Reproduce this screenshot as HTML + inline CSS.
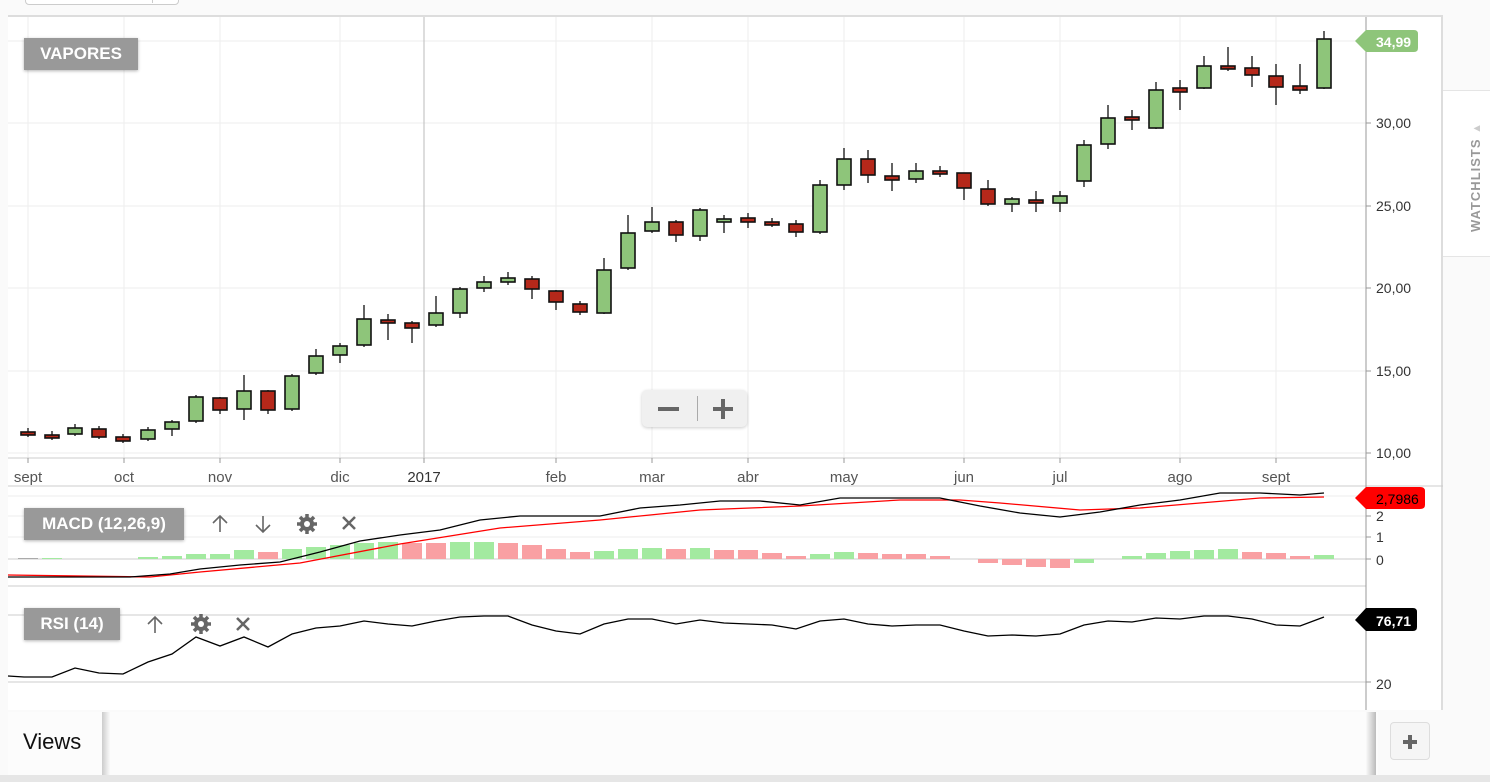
<!DOCTYPE html>
<html><head><meta charset="utf-8"><style>
body{margin:0;width:1490px;height:782px;background:#fafafa;font-family:"Liberation Sans",Arial,sans-serif;overflow:hidden;position:relative}
.g{fill:#8ec57a;stroke:#111;stroke-width:1.6}
.r{fill:#b5281a;stroke:#111;stroke-width:1.6}
.w line{stroke:#222;stroke-width:1.4}
.lbl{position:absolute;background:#999;color:#fff;font-weight:bold;font-size:17px;box-shadow:0 1px 3px rgba(0,0,0,.3)}
</style></head><body>
<div style="position:absolute;left:25px;top:-6px;width:152px;height:9px;border:1px solid #ccc;border-radius:4px;background:#fff"></div>
<div style="position:absolute;left:152px;top:-6px;width:1px;height:9px;background:#ccc"></div>
<div style="position:absolute;left:8px;top:15px;width:1435px;height:695px;background:#fff;border-top:2px solid #ddd;border-right:2px solid #ddd;box-sizing:border-box"></div>
<div style="position:absolute;left:1443px;top:90px;width:47px;height:165px;background:#fff;border-top:1px solid #e5e5e5;border-bottom:1px solid #e5e5e5"></div>
<div style="position:absolute;left:1468px;top:232px;transform:rotate(-90deg);transform-origin:0 0;color:#999;font-size:13px;font-weight:bold;letter-spacing:1px;white-space:nowrap">WATCHLISTS <span style="font-size:11px;color:#ccc">▲</span></div>
<svg style="position:absolute;left:0;top:0" width="1490" height="782">
<g stroke="#eee" stroke-width="1">
<line x1="8" y1="41" x2="1366" y2="41"/><line x1="8" y1="123" x2="1366" y2="123"/><line x1="8" y1="206" x2="1366" y2="206"/><line x1="8" y1="288" x2="1366" y2="288"/><line x1="8" y1="371" x2="1366" y2="371"/><line x1="8" y1="453" x2="1366" y2="453"/>
<line x1="28" y1="17" x2="28" y2="458"/><line x1="124" y1="17" x2="124" y2="458"/><line x1="220" y1="17" x2="220" y2="458"/><line x1="340" y1="17" x2="340" y2="458"/><line x1="556" y1="17" x2="556" y2="458"/><line x1="652" y1="17" x2="652" y2="458"/><line x1="748" y1="17" x2="748" y2="458"/><line x1="844" y1="17" x2="844" y2="458"/><line x1="964" y1="17" x2="964" y2="458"/><line x1="1060" y1="17" x2="1060" y2="458"/><line x1="1180" y1="17" x2="1180" y2="458"/><line x1="1276" y1="17" x2="1276" y2="458"/>
<line x1="8" y1="496" x2="1366" y2="496"/><line x1="8" y1="516" x2="1366" y2="516"/><line x1="8" y1="537" x2="1366" y2="537"/>
</g>
<line x1="424" y1="17" x2="424" y2="458" stroke="#bbb"/>
<g stroke="#ccc"><line x1="8" y1="458" x2="1366" y2="458"/><line x1="8" y1="486" x2="1443" y2="486"/><line x1="8" y1="559" x2="1366" y2="559"/><line x1="8" y1="586" x2="1366" y2="586"/><line x1="8" y1="615" x2="1366" y2="615"/><line x1="8" y1="682" x2="1366" y2="682"/></g>
<line x1="1366" y1="17" x2="1366" y2="710" stroke="#999"/>
<g stroke="#999"><line x1="1366" y1="123" x2="1371" y2="123"/><line x1="1366" y1="206" x2="1371" y2="206"/><line x1="1366" y1="288" x2="1371" y2="288"/><line x1="1366" y1="371" x2="1371" y2="371"/><line x1="1366" y1="453" x2="1371" y2="453"/><line x1="1366" y1="516" x2="1371" y2="516"/><line x1="1366" y1="537" x2="1371" y2="537"/><line x1="1366" y1="559" x2="1371" y2="559"/><line x1="1366" y1="682" x2="1371" y2="682"/>
<line x1="28" y1="458" x2="28" y2="463"/><line x1="124" y1="458" x2="124" y2="463"/><line x1="220" y1="458" x2="220" y2="463"/><line x1="340" y1="458" x2="340" y2="463"/><line x1="424" y1="458" x2="424" y2="463"/><line x1="556" y1="458" x2="556" y2="463"/><line x1="652" y1="458" x2="652" y2="463"/><line x1="748" y1="458" x2="748" y2="463"/><line x1="844" y1="458" x2="844" y2="463"/><line x1="964" y1="458" x2="964" y2="463"/><line x1="1060" y1="458" x2="1060" y2="463"/><line x1="1180" y1="458" x2="1180" y2="463"/><line x1="1276" y1="458" x2="1276" y2="463"/></g>
<g font-size="14" fill="#333">
<text x="1376" y="128">30,00</text><text x="1376" y="211">25,00</text><text x="1376" y="293">20,00</text><text x="1376" y="376">15,00</text><text x="1376" y="458">10,00</text>
<text x="1376" y="521">2</text><text x="1376" y="542">1</text><text x="1376" y="565">0</text><text x="1376" y="689">20</text>
</g>
<g font-size="15" fill="#555" text-anchor="middle">
<text x="28" y="482">sept</text><text x="124" y="482">oct</text><text x="220" y="482">nov</text><text x="340" y="482">dic</text><text x="424" y="482" fill="#333">2017</text><text x="556" y="482">feb</text><text x="652" y="482">mar</text><text x="748" y="482">abr</text><text x="844" y="482">may</text><text x="964" y="482">jun</text><text x="1060" y="482">jul</text><text x="1180" y="482">ago</text><text x="1276" y="482">sept</text>
</g>
<g fill="#a3eaa0">
<rect x="42" y="558" width="20" height="1"/><rect x="138" y="557" width="20" height="2"/><rect x="162" y="556" width="20" height="3"/><rect x="186" y="554" width="20" height="5"/><rect x="210" y="554" width="20" height="5"/><rect x="234" y="550" width="20" height="9"/><rect x="282" y="549" width="20" height="10"/><rect x="306" y="547" width="20" height="12"/><rect x="330" y="545" width="20" height="14"/><rect x="354" y="543" width="20" height="16"/><rect x="378" y="542" width="20" height="17"/><rect x="450" y="542" width="20" height="17"/><rect x="474" y="542" width="20" height="17"/><rect x="594" y="551" width="20" height="8"/><rect x="618" y="549" width="20" height="10"/><rect x="642" y="548" width="20" height="11"/><rect x="690" y="548" width="20" height="11"/><rect x="810" y="554" width="20" height="5"/><rect x="834" y="552" width="20" height="7"/><rect x="1074" y="559" width="20" height="4"/><rect x="1122" y="556" width="20" height="3"/><rect x="1146" y="553" width="20" height="6"/><rect x="1170" y="551" width="20" height="8"/><rect x="1194" y="550" width="20" height="9"/><rect x="1218" y="549" width="20" height="10"/><rect x="1314" y="555" width="20" height="4"/>
</g>
<rect x="18" y="558" width="20" height="1" fill="#aaa"/>
<g fill="#f9a0a3">
<rect x="258" y="552" width="20" height="7"/><rect x="402" y="543" width="20" height="16"/><rect x="426" y="543" width="20" height="16"/><rect x="498" y="543" width="20" height="16"/><rect x="522" y="545" width="20" height="14"/><rect x="546" y="549" width="20" height="10"/><rect x="570" y="552" width="20" height="7"/><rect x="666" y="549" width="20" height="10"/><rect x="714" y="550" width="20" height="9"/><rect x="738" y="550" width="20" height="9"/><rect x="762" y="553" width="20" height="6"/><rect x="786" y="556" width="20" height="3"/><rect x="858" y="553" width="20" height="6"/><rect x="882" y="554" width="20" height="5"/><rect x="906" y="554" width="20" height="5"/><rect x="930" y="556" width="20" height="3"/><rect x="978" y="559" width="20" height="4"/><rect x="1002" y="559" width="20" height="6"/><rect x="1026" y="559" width="20" height="8"/><rect x="1050" y="559" width="20" height="9"/><rect x="1242" y="552" width="20" height="7"/><rect x="1266" y="553" width="20" height="6"/><rect x="1290" y="556" width="20" height="3"/>
</g>
<polyline fill="none" stroke="#f00" stroke-width="1.3" points="8,575 150,577 200,572 300,563 400,544 500,528 600,520 700,510 800,506 900,500 960,500 1000,503 1080,510 1140,508 1200,503 1260,498 1324,497"/>
<polyline fill="none" stroke="#000" stroke-width="1.3" points="8,577 130,577 170,574 200,569 240,565 280,562 320,552 360,541 400,535 440,530 480,520 520,516 560,516 600,516 640,508 680,505 720,501 760,501 800,505 840,498 900,498 940,498 980,506 1020,513 1060,517 1100,512 1140,505 1180,500 1220,493 1260,493 1300,495 1324,493"/>
<polyline fill="none" stroke="#000" stroke-width="1.3" points="8,676 24,677 52,677 75,668 99,673 123,674 148,662 172,654 196,637 220,646 244,637 268,647 292,634 316,628 340,626 364,621 388,624 412,626 436,621 460,617 484,616 508,616 532,625 556,631 580,634 604,624 628,619 652,619 676,624 700,620 724,623 748,624 772,625 796,629 820,621 844,619 868,624 892,626 916,625 940,625 964,631 988,636 1012,635 1036,636 1060,634 1084,625 1108,621 1132,622 1156,618 1180,619 1204,616 1228,616 1252,619 1276,625 1300,626 1324,617"/>
<g class="w">
<line x1="28" y1="428" x2="28" y2="437"/><line x1="52" y1="431" x2="52" y2="440"/><line x1="75" y1="424" x2="75" y2="436"/><line x1="99" y1="426" x2="99" y2="439"/><line x1="123" y1="434" x2="123" y2="443"/><line x1="148" y1="427" x2="148" y2="441"/><line x1="172" y1="420" x2="172" y2="436"/><line x1="196" y1="395" x2="196" y2="423"/><line x1="220" y1="397" x2="220" y2="414"/><line x1="244" y1="375" x2="244" y2="420"/><line x1="268" y1="390" x2="268" y2="414"/><line x1="292" y1="374" x2="292" y2="411"/><line x1="316" y1="349" x2="316" y2="375"/><line x1="340" y1="343" x2="340" y2="363"/><line x1="364" y1="305" x2="364" y2="347"/><line x1="388" y1="314" x2="388" y2="340"/><line x1="412" y1="321" x2="412" y2="343"/><line x1="436" y1="296" x2="436" y2="327"/><line x1="460" y1="287" x2="460" y2="318"/><line x1="484" y1="276" x2="484" y2="292"/><line x1="508" y1="272" x2="508" y2="285"/><line x1="532" y1="276" x2="532" y2="299"/><line x1="556" y1="290" x2="556" y2="310"/><line x1="580" y1="301" x2="580" y2="315"/><line x1="604" y1="258" x2="604" y2="314"/><line x1="628" y1="215" x2="628" y2="270"/><line x1="652" y1="207" x2="652" y2="233"/><line x1="676" y1="220" x2="676" y2="242"/><line x1="700" y1="208" x2="700" y2="241"/><line x1="724" y1="215" x2="724" y2="233"/><line x1="748" y1="213" x2="748" y2="228"/><line x1="772" y1="218" x2="772" y2="227"/><line x1="796" y1="220" x2="796" y2="237"/><line x1="820" y1="180" x2="820" y2="234"/><line x1="844" y1="148" x2="844" y2="190"/><line x1="868" y1="150" x2="868" y2="183"/><line x1="892" y1="163" x2="892" y2="191"/><line x1="916" y1="163" x2="916" y2="183"/><line x1="940" y1="166" x2="940" y2="177"/><line x1="964" y1="173" x2="964" y2="200"/><line x1="988" y1="180" x2="988" y2="206"/><line x1="1012" y1="197" x2="1012" y2="212"/><line x1="1036" y1="191" x2="1036" y2="212"/><line x1="1060" y1="191" x2="1060" y2="212"/><line x1="1084" y1="140" x2="1084" y2="187"/><line x1="1108" y1="105" x2="1108" y2="149"/><line x1="1132" y1="110" x2="1132" y2="130"/><line x1="1156" y1="82" x2="1156" y2="129"/><line x1="1180" y1="80" x2="1180" y2="110"/><line x1="1204" y1="56" x2="1204" y2="89"/><line x1="1228" y1="47" x2="1228" y2="71"/><line x1="1252" y1="56" x2="1252" y2="87"/><line x1="1276" y1="64" x2="1276" y2="105"/><line x1="1300" y1="64" x2="1300" y2="94"/><line x1="1324" y1="31" x2="1324" y2="89"/>
</g>
<rect class="r" x="21" y="432" width="14" height="3"/><rect class="r" x="45" y="435" width="14" height="3"/><rect class="g" x="68" y="428" width="14" height="6"/><rect class="r" x="92" y="429" width="14" height="8"/><rect class="r" x="116" y="437" width="14" height="4"/><rect class="g" x="141" y="430" width="14" height="9"/><rect class="g" x="165" y="422" width="14" height="7"/><rect class="g" x="189" y="397" width="14" height="24"/><rect class="r" x="213" y="398" width="14" height="12"/><rect class="g" x="237" y="391" width="14" height="18"/><rect class="r" x="261" y="391" width="14" height="19"/><rect class="g" x="285" y="376" width="14" height="33"/><rect class="g" x="309" y="356" width="14" height="17"/><rect class="g" x="333" y="346" width="14" height="9"/><rect class="g" x="357" y="319" width="14" height="26"/><rect class="r" x="381" y="320" width="14" height="3"/><rect class="r" x="405" y="323" width="14" height="5"/><rect class="g" x="429" y="313" width="14" height="12"/><rect class="g" x="453" y="289" width="14" height="24"/><rect class="g" x="477" y="282" width="14" height="6"/><rect class="g" x="501" y="278" width="14" height="4"/><rect class="r" x="525" y="279" width="14" height="10"/><rect class="r" x="549" y="291" width="14" height="11"/><rect class="r" x="573" y="304" width="14" height="8"/><rect class="g" x="597" y="270" width="14" height="43"/><rect class="g" x="621" y="233" width="14" height="35"/><rect class="g" x="645" y="222" width="14" height="9"/><rect class="r" x="669" y="222" width="14" height="13"/><rect class="g" x="693" y="210" width="14" height="26"/><rect class="g" x="717" y="219" width="14" height="3"/><rect class="r" x="741" y="218" width="14" height="4"/><rect class="r" x="765" y="222" width="14" height="3"/><rect class="r" x="789" y="224" width="14" height="8"/><rect class="g" x="813" y="185" width="14" height="47"/><rect class="g" x="837" y="159" width="14" height="26"/><rect class="r" x="861" y="159" width="14" height="16"/><rect class="r" x="885" y="176" width="14" height="4"/><rect class="g" x="909" y="171" width="14" height="8"/><rect class="r" x="933" y="171" width="14" height="3"/><rect class="r" x="957" y="173" width="14" height="15"/><rect class="r" x="981" y="189" width="14" height="15"/><rect class="g" x="1005" y="199" width="14" height="5"/><rect class="r" x="1029" y="200" width="14" height="3"/><rect class="g" x="1053" y="196" width="14" height="7"/><rect class="g" x="1077" y="145" width="14" height="36"/><rect class="g" x="1101" y="118" width="14" height="26"/><rect class="r" x="1125" y="117" width="14" height="3"/><rect class="g" x="1149" y="90" width="14" height="38"/><rect class="r" x="1173" y="88" width="14" height="4"/><rect class="g" x="1197" y="66" width="14" height="22"/><rect class="r" x="1221" y="66" width="14" height="3"/><rect class="r" x="1245" y="68" width="14" height="7"/><rect class="r" x="1269" y="76" width="14" height="11"/><rect class="r" x="1293" y="86" width="14" height="4"/><rect class="g" x="1317" y="39" width="14" height="49"/>
<path d="M1355,41 L1366,30 L1414,30 Q1418,30 1418,34 L1418,48 Q1418,52 1414,52 L1366,52 Z" fill="#8ec57a"/>
<text x="1376" y="47" font-size="14" font-weight="bold" fill="#fff">34,99</text>
<path d="M1355,498 L1366,487 L1420,487 Q1425,487 1425,491 L1425,505 Q1425,509 1420,509 L1366,509 Z" fill="#f00"/>
<text x="1376" y="504" font-size="14" fill="#000">2,7986</text>
<path d="M1355,620 L1366,608 L1413,608 Q1417,608 1417,612 L1417,627 Q1417,631 1413,631 L1366,631 Z" fill="#000"/>
<text x="1376" y="626" font-size="14" font-weight="bold" fill="#fff">76,71</text>
<g stroke="#666" stroke-width="1.6" fill="none">
<path d="M220,532 V516 M213,523 L220,516 L227,523"/>
<path d="M263,516 V532 M256,525 L263,532 L270,525"/>
<path d="M343,517 L355,529 M355,517 L343,529" stroke-width="2.5"/>
<path d="M155,633 V617 M148,624 L155,617 L162,624"/>
<path d="M237,618 L249,630 M249,618 L237,630" stroke-width="2.5"/>
</g>
<g fill="#666">
<circle cx="307" cy="524" r="7"/><g stroke="#666" stroke-width="3.5"><line x1="307" y1="514" x2="307" y2="534"/><line x1="297" y1="524" x2="317" y2="524"/><line x1="300" y1="517" x2="314" y2="531"/><line x1="314" y1="517" x2="300" y2="531"/></g><circle cx="307" cy="524" r="3" fill="#fff"/>
<circle cx="201" cy="624" r="7"/><g stroke="#666" stroke-width="3.5"><line x1="201" y1="614" x2="201" y2="634"/><line x1="191" y1="624" x2="211" y2="624"/><line x1="194" y1="617" x2="208" y2="631"/><line x1="208" y1="617" x2="194" y2="631"/></g><circle cx="201" cy="624" r="3" fill="#fff"/>
</g>
</svg>
<div class="lbl" style="left:24px;top:38px;width:114px;height:32px;line-height:32px;text-align:center">VAPORES</div>
<div class="lbl" style="left:24px;top:508px;width:160px;height:32px;line-height:32px;text-align:center">MACD (12,26,9)</div>
<div class="lbl" style="left:24px;top:608px;width:96px;height:32px;line-height:32px;text-align:center">RSI (14)</div>
<div style="position:absolute;left:642px;top:390px;width:105px;height:37px;background:#f0f0f0;border-radius:5px;box-shadow:0 1px 3px rgba(0,0,0,.2)">
<div style="position:absolute;left:16px;top:17px;width:21px;height:4px;background:#666"></div>
<div style="position:absolute;left:55px;top:6px;width:1px;height:25px;background:#aaa"></div>
<div style="position:absolute;left:71px;top:17px;width:20px;height:4px;background:#666"></div>
<div style="position:absolute;left:79px;top:9px;width:4px;height:20px;background:#666"></div>
</div>
<div style="position:absolute;left:8px;top:712px;width:1370px;height:63px;background:#fcfcfc"></div>
<div style="position:absolute;left:102px;top:712px;width:8px;height:63px;background:linear-gradient(90deg,#ccc,#fafafa)"></div>
<div style="position:absolute;left:1366px;top:712px;width:10px;height:63px;background:linear-gradient(90deg,#fafafa,#bbb)"></div>
<div style="position:absolute;left:23px;top:729px;font-size:22px;color:#111">Views</div>
<div style="position:absolute;left:1390px;top:722px;width:40px;height:38px;border:1px solid #ddd;border-radius:4px;background:#f5f5f5;box-sizing:border-box">
<div style="position:absolute;left:12px;top:17px;width:14px;height:4px;background:#666"></div>
<div style="position:absolute;left:17px;top:12px;width:4px;height:14px;background:#666"></div>
</div>
<div style="position:absolute;left:0;top:775px;width:1490px;height:7px;background:#e6e6e6"></div>
</body></html>
